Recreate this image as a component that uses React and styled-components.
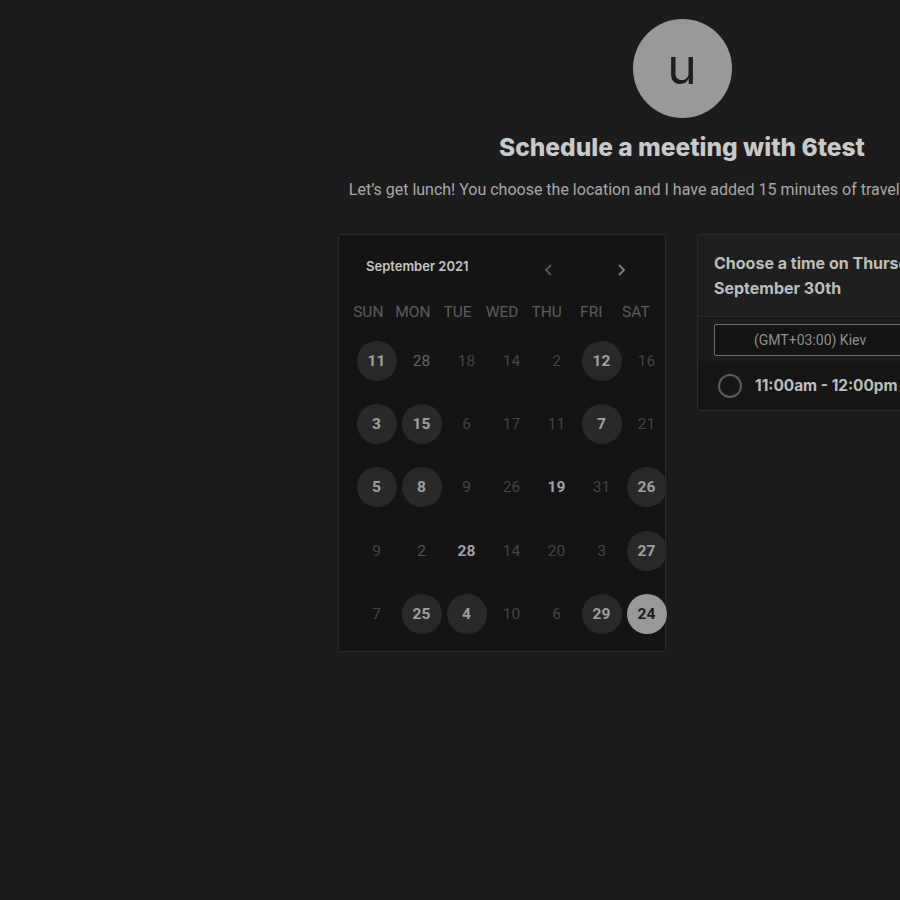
import styled, { createGlobalStyle } from "styled-components";

const GlobalStyle = createGlobalStyle`
  html, body {
    margin: 0;
    padding: 0;
    background: #1c1c1c;
    overflow: hidden;
  }
`;

const Viewport = styled.div`
  width: 100%;
  min-height: 900px;
  overflow: hidden;
`;

const Page = styled.div`
  width: 1364px;
  display: flex;
  flex-direction: column;
  align-items: center;
  padding-top: 19px;
`;

const Avatar = styled.div`
  width: 99px;
  height: 99px;
  border-radius: 50%;
  background: #999999;
  color: #1e1e1e;
  display: flex;
  align-items: center;
  justify-content: center;
  font-family: "Inter", sans-serif;
  font-size: 50px;
  line-height: 1;
  padding-bottom: 6px;
  box-sizing: border-box;
`;

const Title = styled.h1`
  margin: 14px 0 0;
  font-family: "Inter", sans-serif;
  font-weight: 800;
  font-size: 24.5px;
  line-height: 30px;
  color: #c9c9c9;
`;

const Subtitle = styled.p`
  margin: 18px 0 0;
  padding-right: 6px;
  font-family: "Roboto", sans-serif;
  font-size: 16px;
  line-height: 20px;
  color: #a8a8a8;
  white-space: nowrap;
`;

const Panels = styled.div`
  margin-top: 34px;
  display: flex;
  gap: 31px;
  align-items: flex-start;
`;

const Calendar = styled.div`
  width: 328px;
  box-sizing: border-box;
  background: #141414;
  border: 1px solid #2c2c2c;
  border-radius: 2px;
  padding: 0 0 6px;
`;

const MonthBar = styled.div`
  display: flex;
  align-items: center;
  height: 64px;
  padding: 0 0 0 27px;
`;

const MonthLabel = styled.div`
  font-family: "Inter", sans-serif;
  font-weight: 600;
  font-size: 13px;
  color: #c4c4c4;
  width: 175px;
  margin-top: -2px;
`;

const NavBtn = styled.div`
  width: 16px;
  height: 16px;
  display: flex;
  align-items: center;
  justify-content: center;
  margin-top: 6px;
  margin-right: ${(p) => p.$gap || 0}px;
`;

const WeekRow = styled.div`
  display: grid;
  grid-template-columns: repeat(7, 44.6px);
  padding-left: 7px;
  height: 24px;
  align-items: center;
  font-family: "Roboto", sans-serif;
  font-size: 15.5px;
  color: #5c5c5c;
  text-align: center;
  margin-top: 1px;
`;

const DayGrid = styled.div`
  display: grid;
  grid-template-columns: repeat(7, 45px);
  grid-auto-rows: 63.3px;
  padding-left: 15px;
  margin-top: 5px;
`;

const DayCell = styled.div`
  display: flex;
  align-items: center;
  justify-content: center;
`;

const dayColors = {
  open: "#a0a0a0",
  selected: "#1c1c1c",
  bold: "#a2a2a2",
  mid: "#656565",
  soft: "#525252",
  dim: "#444444",
};

const Day = styled.div`
  width: 40px;
  height: 40px;
  border-radius: 50%;
  display: flex;
  align-items: center;
  justify-content: center;
  font-family: "Roboto", sans-serif;
  font-size: 15.5px;
  font-weight: ${(p) => (["open", "selected", "bold"].includes(p.$kind) ? 700 : 400)};
  background: ${(p) =>
    p.$kind === "open" ? "#292929" : p.$kind === "selected" ? "#999999" : "transparent"};
  color: ${(p) => dayColors[p.$kind]};
`;

const TimePanel = styled.div`
  width: 329px;
  box-sizing: border-box;
  border: 1px solid #2c2c2c;
  border-radius: 2px;
  background: #1c1c1c;
`;

const TimeHead = styled.div`
  padding: 16px 16px 15px;
  border-bottom: 1px solid #2a2a2a;
  background: #1f1f1f;
  font-family: "Inter", sans-serif;
  font-weight: 700;
  font-size: 16px;
  line-height: 25px;
  color: #bdbdbd;
`;

const ZoneWrap = styled.div`
  padding: 7px 16px 5px;
`;

const ZoneBox = styled.div`
  height: 32px;
  box-sizing: border-box;
  border: 1px solid #6e6e6e;
  border-radius: 2px;
  background: #141414;
  display: flex;
  align-items: center;
  padding-left: 39px;
  font-family: "Roboto", sans-serif;
  font-size: 14px;
  color: #8f8f8f;
  width: 320px;
`;

const Slot = styled.div`
  height: 49px;
  background: #161616;
  display: flex;
  align-items: center;
  padding-left: 20px;
  gap: 13px;
  font-family: "Inter", sans-serif;
  font-weight: 700;
  font-size: 15.4px;
  color: #bdbdbd;
`;

const Radio = styled.div`
  width: 20px;
  height: 20px;
  border-radius: 50%;
  border: 2px solid #5c5c5c;
`;

const Chevron = ({ dir }) => (
  <svg width="14" height="14" viewBox="0 0 14 14">
    <path
      d={dir === "left" ? "M9 2 L4 7 L9 12" : "M5 2 L10 7 L5 12"}
      fill="none"
      stroke={dir === "left" ? "#555" : "#7a7a7a"}
      strokeWidth="2"
    />
  </svg>
);

const weekDays = ["SUN", "MON", "TUE", "WED", "THU", "FRI", "SAT"];

const days = [
  [[11, "open"], [28, "mid"], [18, "dim"], [14, "dim"], [2, "dim"], [12, "open"], [16, "dim"]],
  [[3, "open"], [15, "open"], [6, "dim"], [17, "dim"], [11, "dim"], [7, "open"], [21, "dim"]],
  [[5, "open"], [8, "open"], [9, "dim"], [26, "dim"], [19, "bold"], [31, "dim"], [26, "open"]],
  [[9, "dim"], [2, "soft"], [28, "bold"], [14, "dim"], [20, "dim"], [3, "dim"], [27, "open"]],
  [[7, "dim"], [25, "open"], [4, "open"], [10, "dim"], [6, "dim"], [29, "open"], [24, "selected"]],
];

export default function App() {
  return (
    <Viewport>
      <GlobalStyle />
      <Page>
        <Avatar>u</Avatar>
        <Title>Schedule a meeting with 6test</Title>
        <Subtitle>
          Let’s get lunch! You choose the location and I have added 15 minutes of travel time each way.
        </Subtitle>
        <Panels>
          <Calendar>
            <MonthBar>
              <MonthLabel>September 2021</MonthLabel>
              <NavBtn $gap={56}>
                <Chevron dir="left" />
              </NavBtn>
              <NavBtn>
                <Chevron dir="right" />
              </NavBtn>
            </MonthBar>
            <WeekRow>
              {weekDays.map((d) => (
                <div key={d}>{d}</div>
              ))}
            </WeekRow>
            <DayGrid>
              {days.flat().map(([n, kind], i) => (
                <DayCell key={i}>
                  <Day $kind={kind}>{n}</Day>
                </DayCell>
              ))}
            </DayGrid>
          </Calendar>
          <TimePanel>
            <TimeHead>
              Choose a time on Thursday,
              <br />
              September 30th
            </TimeHead>
            <ZoneWrap>
              <ZoneBox>(GMT+03:00) Kiev</ZoneBox>
            </ZoneWrap>
            <Slot>
              <Radio />
              11:00am - 12:00pm
            </Slot>
          </TimePanel>
        </Panels>
      </Page>
    </Viewport>
  );
}
